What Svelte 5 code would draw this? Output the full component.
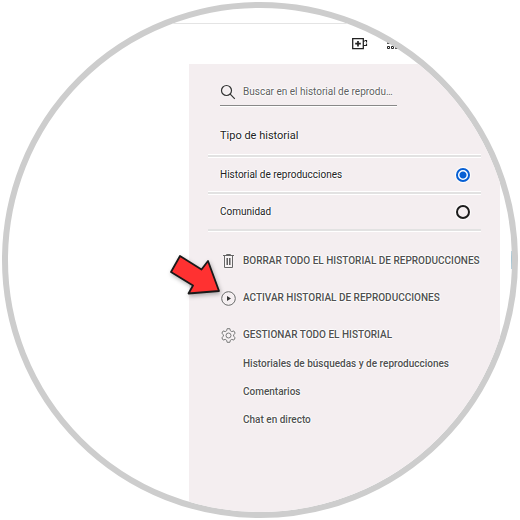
<svelte:options runes={true} />

<script lang="ts">
  type Action = {
    icon: "trash" | "play" | "gear";
    label: string;
  };

  let query = $state("");
  let historyType = $state("watch");

  const historyTypes = [
    { value: "watch", label: "Historial de reproducciones" },
    { value: "community", label: "Comunidad" },
  ];

  const actions: Action[] = [
    { icon: "trash", label: "Borrar todo el historial de reproducciones" },
    { icon: "play", label: "Activar historial de reproducciones" },
    { icon: "gear", label: "Gestionar todo el historial" },
  ];

  const links = ["Historiales de búsquedas y de reproducciones", "Comentarios", "Chat en directo"];
</script>

<div class="lens">
  <div class="browser-bar"></div>
  <header class="masthead">
    <button class="icon-btn" aria-label="Crear">
      <svg width="16" height="12" viewBox="0 0 16 12" fill="none" stroke="#222">
        <path d="M.7.7h10.6v10H.7z" stroke-width="1.3" />
        <path d="M6 3v5.5M3.2 5.700h5.6" stroke-width="1.7" />
        <path d="M11.3 3.500h1.2M12.5 2.500h2v2M11.3 7.500h1.2M12.5 7.500h2v-2" stroke-width="1.2" />
      </svg>
    </button>
    <button class="icon-btn" aria-label="Aplicaciones">
      <svg width="16" height="12" viewBox="0 0 16 12" fill="none" stroke="#222">
        <path d="M1.5 3.500h2v2h-2zM5.500 3.500h2v2h-2zM9.500 3.500h2v2h-2z" />
        <path d="M1.5 8.500h2v2h-2zM5.500 8.500h2v2h-2zM9.500 8.500h2v2h-2z" />
      </svg>
    </button>
  </header>

  <main class="page">
    <aside class="panel">
      <label class="search">
        <svg width="16" height="16" viewBox="0 0 16 16" fill="none" stroke="#333" stroke-width="1.2">
          <circle cx="6.5" cy="6.5" r="5" />
          <path d="M10.2 10.2l4.6 4.6" />
        </svg>
        <input
          type="text"
          bind:value={query}
          aria-label="Buscar en el historial"
          placeholder="Buscar en el historial de reproducciones"
        />
      </label>

      <fieldset class="types">
        <legend>Tipo de historial</legend>
        {#each historyTypes as type}
          <label class="type-row">
            <span>{type.label}</span>
            <input type="radio" name="history-type" value={type.value} bind:group={historyType} />
          </label>
        {/each}
      </fieldset>

      <div class="actions">
        {#each actions as action}
          <button class="action">
            {#if action.icon === "trash"}
              <svg width="16" height="16" viewBox="0 0 16 16" fill="none" stroke="#666">
                <path d="M3 2.500h11M6.500 2V1.500h4V2M4.500 3v11.500h8V3" />
                <path d="M7.2 5v7M9.800 5v7" stroke="#444" stroke-width="1.3" />
              </svg>
            {:else if action.icon === "play"}
              <svg width="16" height="16" viewBox="0 0 16 16" fill="none" stroke="#666">
                <circle cx="8.5" cy="8.5" r="6.8" />
                <path d="M7 6v5L11 8.500z" fill="#333" stroke="none" />
              </svg>
            {:else}
              <svg width="16" height="16" viewBox="0 0 16 16" fill="none" stroke="#777">
                <path
                  d="M7.100 1.700h2.800l.4 2 1.500.9 2-.7 1.400 2.400-1.600 1.400v1.600l1.600 1.400-1.400 2.400-2-.7-1.500.9-.4 2H7.100l-.4-2-1.500-.9-2 .7-1.400-2.400 1.600-1.400V7.700L1.800 6.300l1.400-2.400 2 .7 1.500-.9z"
                  stroke-linejoin="round"
                />
                <circle cx="8.5" cy="8.5" r="2.5" />
              </svg>
            {/if}
            <span>{action.label}</span>
          </button>
        {/each}
      </div>

      <nav class="links">
        {#each links as link}
          <a href="#history">{link}</a>
        {/each}
      </nav>
    </aside>
  </main>

  <div class="scroll-thumb"></div>

  <svg class="pointer" width="56" height="48" viewBox="0 0 56 48">
    <path
      d="M13 8L34.5 21.5L41 13L52 43L21.5 45.5L26 37.5L4 24Z"
      fill="#ff3131"
      stroke="#191919"
      stroke-width="1.8"
      stroke-linejoin="round"
    />
  </svg>
</div>

<style>
  :global(body) {
    background: #fff;
  }

  .lens {
    position: relative;
    display: flex;
    flex-direction: column;
    box-sizing: border-box;
    margin: 2px;
    aspect-ratio: 1;
    border: 6px solid #cdcdcd;
    border-radius: 50%;
    overflow: hidden;
    background: #fff;
    color: #222;
    font-family: Roboto, sans-serif;
    font-size: 10px;
    line-height: 16px;
  }

  .browser-bar {
    height: 15px;
    border-bottom: 1px solid #e4e4e4;
  }

  .masthead {
    display: flex;
    align-items: center;
    justify-content: flex-end;
    gap: 18px;
    height: 40px;
    padding-right: 110px;
  }

  button {
    display: flex;
    align-items: center;
    padding: 0;
    border: 0;
    background: none;
    color: inherit;
    font: inherit;
    cursor: pointer;
  }

  .page {
    flex: 1;
    display: flex;
    padding-left: 181px;
    padding-right: 12px;
  }

  .panel {
    flex: 1;
    min-width: 0;
    padding: 15px 19px;
    background: #f4eef0;
    text-shadow:
      1px 0 1px #fff,
      -1px 0 1px #fff,
      0 1px 1px #fff,
      0 -1px 1px #fff;
  }

  svg {
    flex: none;
  }

  .panel svg {
    filter: drop-shadow(0 0 1px #fff);
  }

  .search {
    display: flex;
    align-items: center;
    gap: 7px;
    width: 177px;
    height: 26px;
    margin-left: 12px;
    border-bottom: 1px solid #888;
    box-shadow: 0 1px #fff;
  }

  .search input {
    flex: 1;
    min-width: 0;
    padding: 0;
    border: 0;
    outline: 0;
    background: none;
    font: inherit;
    text-shadow: inherit;
    text-overflow: ellipsis;
  }

  .search input::placeholder {
    color: #606060;
    opacity: 1;
  }

  .types {
    margin: 0;
    padding: 0;
    border: 0;
  }

  .types legend {
    padding: 22px 12px 11px;
    font-size: 11px;
  }

  .type-row {
    display: flex;
    align-items: center;
    justify-content: space-between;
    height: 35px;
    padding: 0 11px 0 12px;
    border-top: 2px solid #e2e2e2;
    box-shadow:
      0 -1px #fff,
      inset 0 1px #fff;
  }

  .type-row:last-child {
    border-bottom: 2px solid #e2e2e2;
    box-shadow:
      0 -1px #fff,
      inset 0 1px #fff,
      0 1px #fff;
  }

  .type-row input {
    appearance: none;
    width: 14px;
    height: 14px;
    margin: 0;
    border: 2px solid #1c1c1c;
    border-radius: 50%;
    box-shadow: 0 0 1px 1px #fff;
  }

  .type-row input:checked {
    border-color: #065fd4;
    background: radial-gradient(circle, #065fd4 3px, #fff 4px);
  }

  .actions {
    display: flex;
    flex-direction: column;
    gap: 21px;
    padding: 22px 0 0 12px;
    color: #505050;
    font-weight: 500;
  }

  .action {
    gap: 7px;
    height: 16px;
    text-transform: uppercase;
    text-shadow: inherit;
    white-space: nowrap;
  }

  .links {
    display: flex;
    flex-direction: column;
    align-items: flex-start;
    gap: 12px;
    padding: 13px 0 0 35px;
    font-weight: 500;
  }

  .links a {
    color: #505050;
    text-decoration: none;
  }

  /* Overlays */
  .scroll-thumb {
    position: absolute;
    top: 243px;
    right: 0;
    width: 1px;
    height: 18px;
    background: #a9c6d3;
  }

  .pointer {
    position: absolute;
    top: 240px;
    left: 159px;
    filter: drop-shadow(1px 2px 2px rgba(0, 0, 0, 0.3));
  }
</style>
